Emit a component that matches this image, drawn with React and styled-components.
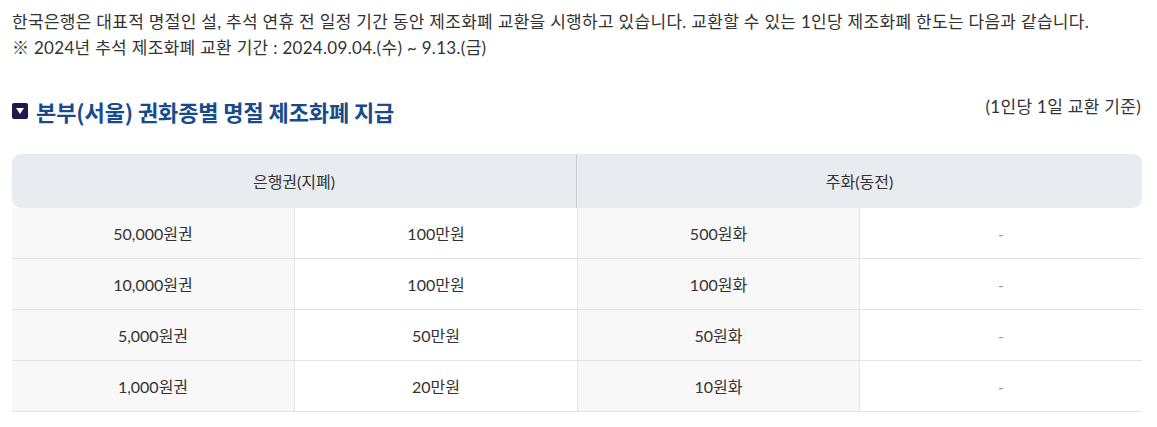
import React from 'react';
import styled, { createGlobalStyle } from 'styled-components';

const Global = createGlobalStyle`
  body {
    margin: 0;
    background: #fff;
    font-family: "Lato", "Noto Sans CJK KR", "Noto Sans", sans-serif;
    color: #333;
  }
`;

const Page = styled.div`
  padding: 9px 15px 0 12px;
`;

const Intro = styled.p`
  margin: 0;
  font-size: 17px;
  line-height: 26px;
  color: #333;
  letter-spacing: 0.3px;
`;

const TitleRow = styled.div`
  display: flex;
  justify-content: space-between;
  align-items: flex-start;
  margin-top: 34px;
`;

const Title = styled.h3`
  display: flex;
  align-items: center;
  gap: 8px;
  margin: 0;
  font-family: "Noto Sans CJK KR", sans-serif;
  font-size: 22px;
  line-height: 32px;
  font-weight: 700;
  color: #184a8c;
  letter-spacing: -0.1px;
`;

const Marker = styled.span`
  display: inline-flex;
  align-items: center;
  justify-content: center;
  width: 16px;
  height: 16px;
  border-radius: 2px;
  background: #1c1b4b;
`;

const Note = styled.span`
  font-size: 17px;
  line-height: 24px;
  color: #333;
  letter-spacing: 0.3px;
  margin-right: 1px;
`;

const Table = styled.div`
  margin-top: 27px;
  width: 1130px;
`;

const Head = styled.div`
  display: grid;
  grid-template-columns: 564px 566px;
  height: 54px;
  background: #e8ebef;
  border-radius: 9px;
`;

const HeadCell = styled.div`
  display: flex;
  align-items: center;
  justify-content: center;
  font-size: 16px;
  color: #333;
  border-left: ${(p) => (p.$divider ? '1px solid #c9ccd1' : 'none')};
`;

const Row = styled.div`
  display: grid;
  grid-template-columns: 282px 283px 282px 283px;
  height: 50px;
  border-bottom: 1px solid #e3e3e3;
`;

const Cell = styled.div`
  display: flex;
  align-items: center;
  justify-content: center;
  font-size: 16px;
  color: #333;
  background: ${(p) => (p.$shade ? '#f8f8f8' : '#fff')};
  border-left: ${(p) => (p.$first ? 'none' : '1px solid #e6e6e6')};
`;

const Dash = styled.span`
  color: #999;
`;

const rows = [
  ['50,000원권', '100만원', '500원화'],
  ['10,000원권', '100만원', '100원화'],
  ['5,000원권', '50만원', '50원화'],
  ['1,000원권', '20만원', '10원화'],
];

export default function App() {
  return (
    <Page>
      <Global />
      <Intro>
        한국은행은 대표적 명절인 설, 추석 연휴 전 일정 기간 동안 제조화폐 교환을 시행하고 있습니다. 교환할 수 있는 1인당 제조화폐 한도는 다음과 같습니다.
        <br />※ 2024년 추석 제조화폐 교환 기간 : 2024.09.04.(수) ~ 9.13.(금)
      </Intro>
      <TitleRow>
        <Title>
          <Marker>
            <svg width="8" height="6" viewBox="0 0 8 6">
              <path d="M0 0 H8 L4 6 Z" fill="#fff" />
            </svg>
          </Marker>
          본부(서울) 권화종별 명절 제조화폐 지급
        </Title>
        <Note>(1인당 1일 교환 기준)</Note>
      </TitleRow>
      <Table>
        <Head>
          <HeadCell>은행권(지폐)</HeadCell>
          <HeadCell $divider>주화(동전)</HeadCell>
        </Head>
        {rows.map((r) => (
          <Row key={r[0]}>
            <Cell $shade $first>{r[0]}</Cell>
            <Cell>{r[1]}</Cell>
            <Cell $shade>{r[2]}</Cell>
            <Cell><Dash>-</Dash></Cell>
          </Row>
        ))}
      </Table>
    </Page>
  );
}
